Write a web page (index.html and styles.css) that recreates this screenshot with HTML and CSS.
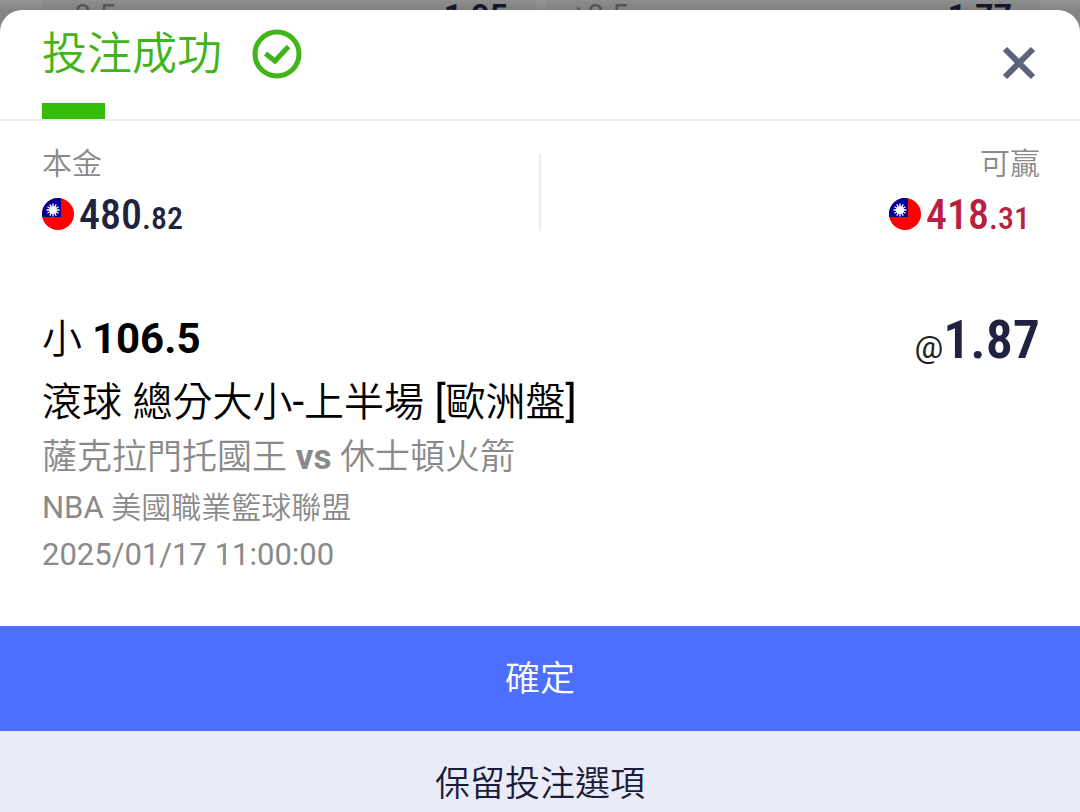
FILE: index.html
```html
<!DOCTYPE html>
<html lang="zh-Hant">
  <head>
    <meta charset="UTF-8" />
    <meta name="viewport" content="width=device-width, initial-scale=1.0" />
    <title>投注成功</title>
    <link rel="stylesheet" href="styles.css">
  </head>
  <body>
    <!-- Odds list behind the sheet -->
    <div class="odds-board" aria-hidden="true">
      <div class="odds-cell">
        <span class="handicap">-8.5</span>
        <span class="price">1.95</span>
      </div>
      <div class="odds-cell">
        <span class="handicap">+8.5</span>
        <span class="price">1.77</span>
      </div>
    </div>

    <main class="sheet">
      <header class="sheet-header">
        <h1 class="sheet-title">投注成功</h1>
        <svg class="success-icon" viewBox="0 0 50 50" aria-hidden="true">
          <circle cx="25" cy="25" r="22" />
          <path d="M13.5 24.5 L23 32 L36.5 17.5" />
        </svg>
        <button type="button" class="close-btn" aria-label="關閉">
          <svg viewBox="0 0 34 34" aria-hidden="true">
            <path d="M3 3 L31 31 M31 3 L3 31" />
          </svg>
        </button>
      </header>

      <section class="amounts">
        <div class="amount">
          <div class="amount-label">本金</div>
          <div class="amount-value">
            <svg class="flag" viewBox="0 0 32 32" aria-hidden="true">
              <defs>
                <clipPath id="flagClip"><circle cx="16" cy="16" r="16" /></clipPath>
                <g id="flagTw" clip-path="url(#flagClip)">
                  <rect width="32" height="32" fill="#fe0000" />
                  <rect width="19" height="19" fill="#000095" />
                  <g stroke="#fff" stroke-width="1.3">
                    <path d="M11 5.5v13M4.5 12h13M7.75 6.4l6.5 11.2M14.25 6.4L7.75 17.6M5.4 8.75l11.2 6.5M16.6 8.75L5.4 15.25" />
                  </g>
                  <circle cx="11" cy="12" r="3.8" fill="#fff" />
                </g>
              </defs>
              <use href="#flagTw" />
            </svg>
            <span class="number">480<small>.82</small></span>
          </div>
        </div>
        <div class="amount win">
          <div class="amount-label">可贏</div>
          <div class="amount-value">
            <svg class="flag" viewBox="0 0 32 32" aria-hidden="true">
              <use href="#flagTw" />
            </svg>
            <span class="number">418<small>.31</small></span>
          </div>
        </div>
      </section>

      <section class="bet">
        <div class="bet-top">
          <h2 class="pick">小 <b>106.5</b></h2>
          <div class="odds"><span class="at">@</span>1.87</div>
        </div>
        <p class="market">滾球<span class="latin"> </span>總分大小<span class="latin">-</span>上半場<span class="latin"> [</span>歐洲盤<span class="latin">]</span></p>
        <p class="teams">薩克拉門托國王 <b>vs</b> 休士頓火箭</p>
        <p class="league"><span class="latin">NBA </span>美國職業籃球聯盟</p>
        <p class="time">2025/01/17 11:00:00</p>
      </section>

      <div class="actions">
        <button type="button" class="btn btn-primary">確定</button>
        <button type="button" class="btn btn-secondary">保留投注選項</button>
      </div>
    </main>
  </body>
</html>
```

FILE: styles.css
```css
* {
  margin: 0;
  padding: 0;
  box-sizing: border-box;
}

body {
  height: 100vh;
  overflow: hidden;
  background: #858585;
  color: #000;
  font-family: Roboto, "Noto Sans CJK TC DemiLight", "Noto Sans CJK TC", sans-serif;
  font-weight: 400;
}

button {
  border: none;
  background: none;
  font: inherit;
  cursor: pointer;
}

/* odds list */
.odds-board {
  display: grid;
  grid-template-columns: 1fr 1fr;
  gap: 10px;
  height: 10px;
  padding: 0 40px 0 42px;
  overflow: hidden;
  background: linear-gradient(#949494, #858585);
}

.odds-cell {
  display: flex;
  justify-content: space-between;
  height: 10px;
  padding: 0 28px 0 24px;
  overflow: hidden;
  background: linear-gradient(#8e8e8e, #808080);
  line-height: 30px;
}

.handicap {
  color: #555;
  font-size: 30px;
}

.price {
  color: #15152c;
  font-size: 32px;
  font-weight: 700;
}

/* bottom sheet */
.sheet {
  background: #fff;
  border-radius: 22px 22px 0 0;
}

.sheet-header {
  display: flex;
  align-items: flex-start;
  gap: 30px;
  height: 111px;
  padding: 0 40px 0 42px;
  border-bottom: 2px solid #ececec;
}

.sheet-title {
  display: flex;
  flex-direction: column;
  justify-content: space-between;
  height: 109px;
  padding-top: 15px;
  color: #3fb519;
  font-size: 45px;
  font-weight: 400;
  line-height: 60px;
}

.sheet-title::after {
  content: "";
  width: 63px;
  height: 16px;
  background: #35bb0a;
}

.success-icon {
  width: 50px;
  height: 50px;
  margin-top: 19px;
  fill: none;
  stroke: #3fb519;
  stroke-width: 5;
}

.close-btn {
  margin: 36px 4px 0 auto;
}

.close-btn svg {
  display: block;
  width: 34px;
  height: 34px;
  stroke: #5c6378;
  stroke-width: 6;
}

/* stake and payout */
.amounts {
  display: grid;
  grid-template-columns: 1fr 1fr;
  padding: 33px 40px 0 42px;
}

.amount {
  height: 77px;
}

.amount:first-child {
  border-right: 2px solid #ececec;
}

.amount-label {
  margin-top: -10px;
  color: #8a8a8a;
  font-size: 30px;
  line-height: 40px;
}

.amount-value {
  display: flex;
  align-items: center;
  gap: 5px;
  height: 60px;
  color: #20233f;
}

.flag {
  width: 32px;
  height: 32px;
}

.number {
  font-family: "Roboto Condensed", Roboto, sans-serif;
  font-size: 42px;
  font-weight: 500;
}

.number small {
  font-size: 32px;
}

.win {
  text-align: right;
}

.win .amount-value {
  justify-content: flex-end;
  padding-right: 10px;
  color: #b91f41;
}

/* bet details */
.bet {
  padding: 75px 40px 48px 42px;
  color: #8a8a8a;
}

.bet-top {
  display: flex;
  justify-content: space-between;
  align-items: center;
  height: 66px;
  color: #000;
}

.pick {
  font-size: 40px;
  font-weight: 400;
  line-height: 60px;
}

.pick b {
  font-size: 42px;
  font-weight: 700;
}

.odds {
  color: #20233f;
  font-family: "Roboto Condensed", Roboto, sans-serif;
  font-size: 54px;
  font-weight: 600;
}

.at {
  color: #222;
  font-family: Roboto, sans-serif;
  font-size: 32px;
  font-weight: 400;
}

.market {
  height: 60px;
  color: #000;
  font-size: 40px;
  line-height: 60px;
}

.market .latin {
  font-size: 42px;
}

.teams {
  font-size: 35px;
  line-height: 52px;
}

.teams b {
  font-weight: 700;
}

.league,
.time {
  height: 47px;
  font-size: 30px;
  line-height: 48px;
}

.time,
.league .latin {
  font-size: 31px;
}

.btn {
  display: block;
  width: 100%;
  height: 105px;
  padding-bottom: 6px;
  font-size: 35px;
}

.btn-primary {
  background: #4c6fff;
  color: #fff;
}

.btn-secondary {
  background: #e9ebf7;
  color: #191c3a;
}
```
